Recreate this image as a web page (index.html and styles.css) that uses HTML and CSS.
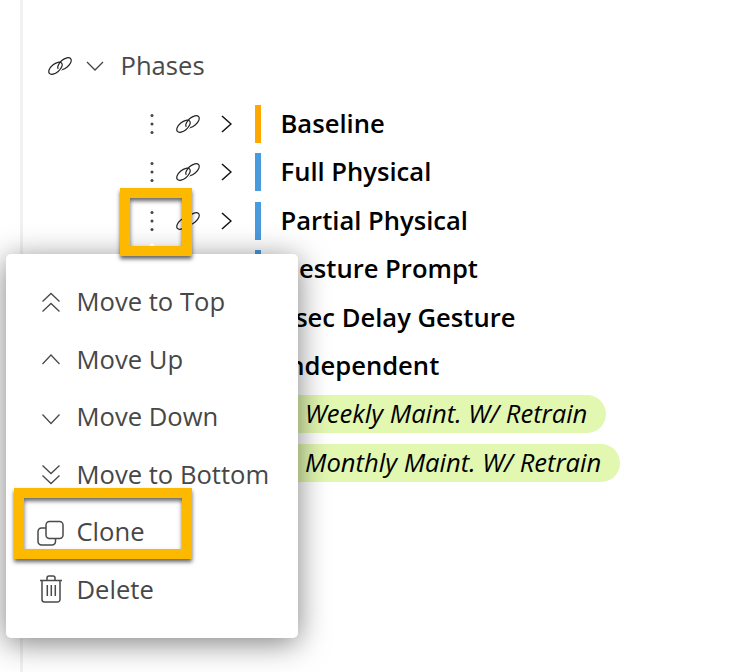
FILE: index.html
```html
<!DOCTYPE html>
<html lang="en">
<head>
<meta charset="utf-8">
<title>Phases</title>
<link rel="stylesheet" href="styles.css">
</head>
<body>
<svg class="defs" width="0" height="0" aria-hidden="true">
  <defs>
    <clipPath id="link-front"><path d="M-2 16L26 2V20H-2z"/></clipPath>
    <symbol id="link" viewBox="0 0 24 18">
      <ellipse class="link-ring" cx="16.500" cy="6.800" rx="8" ry="4.200" transform="rotate(-40 16.500 6.800)"/>
      <g clip-path="url(#link-front)">
        <ellipse class="link-halo" cx="7.500" cy="11.200" rx="8" ry="4.200" transform="rotate(-40 7.500 11.200)"/>
      </g>
      <ellipse class="link-ring" cx="7.500" cy="11.200" rx="8" ry="4.200" transform="rotate(-40 7.500 11.200)"/>
    </symbol>
    <symbol id="dots" viewBox="0 0 8 24">
      <circle cx="4" cy="3.500" r="1.500" fill="currentColor"/>
      <circle cx="4" cy="12" r="1.500" fill="currentColor"/>
      <circle cx="4" cy="20.500" r="1.500" fill="currentColor"/>
    </symbol>
  </defs>
</svg>
<main class="panel">
  <div class="phases-head">
    <svg class="link-icon head-link"><use href="#link"/></svg>
    <svg class="head-chevron" viewBox="0 0 18 10"><path d="M1 1l8 8 8-8" fill="none" stroke="currentColor" stroke-width="1.300"/></svg>
    <span class="head-title">Phases</span>
  </div>
  <ul class="tree">
    <li class="row">
      <svg class="dots"><use href="#dots"/></svg>
      <svg class="link-icon"><use href="#link"/></svg>
      <svg class="row-chevron" viewBox="0 0 11 18"><path d="M1 1l9 8-9 8" fill="none" stroke="currentColor" stroke-width="1.500"/></svg>
      <span class="bar bar-orange"></span>
      <span class="label">Baseline</span>
    </li>
    <li class="row">
      <svg class="dots"><use href="#dots"/></svg>
      <svg class="link-icon"><use href="#link"/></svg>
      <svg class="row-chevron" viewBox="0 0 11 18"><path d="M1 1l9 8-9 8" fill="none" stroke="currentColor" stroke-width="1.500"/></svg>
      <span class="bar bar-blue"></span>
      <span class="label">Full Physical</span>
    </li>
    <li class="row">
      <svg class="dots"><use href="#dots"/></svg>
      <svg class="link-icon"><use href="#link"/></svg>
      <svg class="row-chevron" viewBox="0 0 11 18"><path d="M1 1l9 8-9 8" fill="none" stroke="currentColor" stroke-width="1.500"/></svg>
      <span class="bar bar-blue"></span>
      <span class="label">Partial Physical</span>
    </li>
    <li class="row">
      <span class="bar bar-blue bar-offset"></span>
      <span class="label">Gesture Prompt</span>
    </li>
    <li class="row">
      <span class="bar bar-blue bar-offset"></span>
      <span class="label">5sec Delay Gesture</span>
    </li>
    <li class="row">
      <span class="bar bar-blue bar-offset"></span>
      <span class="label">Independent</span>
    </li>
    <li class="row">
      <span class="pill">Weekly Maint. W/ Retrain</span>
    </li>
    <li class="row">
      <span class="pill">Monthly Maint. W/ Retrain</span>
    </li>
  </ul>
</main>

<div class="menu">
  <span class="menu-arrow"></span>
  <div class="menu-item">
    <svg class="menu-icon" viewBox="0 0 24 24"><path d="M3.500 11.500l8.500-8 8.500 8M3.500 21.500l8.500-8 8.500 8"/></svg>
    <span>Move to Top</span>
  </div>
  <div class="menu-item">
    <svg class="menu-icon" viewBox="0 0 24 24"><path d="M3.500 16l8.500-9 8.500 9"/></svg>
    <span>Move Up</span>
  </div>
  <div class="menu-item">
    <svg class="menu-icon" viewBox="0 0 24 24"><path d="M3.500 8.500l8.500 9 8.500-9"/></svg>
    <span>Move Down</span>
  </div>
  <div class="menu-item">
    <svg class="menu-icon" viewBox="0 0 24 24"><path d="M3.500 2.500l8.500 8 8.500-8M3.500 12.500l8.500 8 8.500-8"/></svg>
    <span>Move to Bottom</span>
  </div>
  <div class="menu-item">
    <svg class="menu-icon menu-icon-bold" viewBox="0 0 24 24"><rect x="7" y="0.500" width="17" height="17" rx="3.500"/><path d="M7 7H2.500A3.500 3.500 0 0 0-1 10.500v10A3.500 3.500 0 0 0 2.500 24H13a3.500 3.500 0 0 0 3.500-3.500v-3"/></svg>
    <span>Clone</span>
  </div>
  <div class="menu-item">
    <svg class="menu-icon menu-icon-bold" viewBox="0 0 24 24"><path d="M1 2.500h22M8 2.500V0a2 2 0 0 1 2-2h4a2 2 0 0 1 2 2v2.500M3 2.500v19A2.500 2.500 0 0 0 5.500 24h13a2.500 2.500 0 0 0 2.500-2.500v-19M8.300 7v11M12.300 7v11M16.300 7v11"/></svg>
    <span>Delete</span>
  </div>
</div>

<div class="callout callout-dots"></div>
<div class="callout callout-clone"></div>
</body>
</html>
```

FILE: styles.css
```css
* { box-sizing: border-box; }
html, body { margin: 0; padding: 0; }
body {
  position: relative;
  width: 756px;
  height: 672px;
  overflow: hidden;
  background: #fff;
  font-family: "Open Sans", sans-serif;
}
.defs { position: absolute; }
.link-ring {
  fill: none;
  stroke: currentColor;
  stroke-width: 1.200;
}
.link-halo {
  fill: none;
  stroke: #fff;
  stroke-width: 3.400;
}
.panel {
  margin-left: 20px;
  height: 672px;
  border-left: 3px solid #f1f1f1;
  padding-top: 50px;
}
.phases-head {
  display: flex;
  align-items: center;
  height: 32px;
  padding-left: 25px;
  color: #4a4a4a;
}
.link-icon {
  width: 24px;
  height: 18px;
  flex: none;
  overflow: visible;
  color: #222;
}
.head-chevron {
  width: 18px;
  height: 10px;
  margin-left: 14px;
  flex: none;
  color: #444;
}
.head-title {
  margin-left: 16.500px;
  font-size: 25.6px;
  line-height: 32px;
}
.tree {
  list-style: none;
  margin: 23px 0 0;
  padding: 0;
  display: flex;
  flex-direction: column;
  gap: 10.4px;
}
.row {
  display: flex;
  align-items: center;
  height: 38px;
  padding-left: 125px;
  color: #000;
}
.dots {
  width: 8px;
  height: 24px;
  flex: none;
  color: #444;
}
.row .link-icon { margin-left: 20px; }
.row-chevron {
  width: 11px;
  height: 18px;
  margin-left: 21px;
  flex: none;
  color: #111;
}
.bar {
  width: 6px;
  height: 38px;
  margin-left: 23px;
  flex: none;
}
.bar-offset { margin-left: 107px; }
.bar-orange { background: #ffa800; }
.bar-blue { background: #4a9ade; }
.label {
  margin-left: 19.500px;
  font-size: 25.6px;
  font-weight: 600;
  line-height: 36px;
  white-space: nowrap;
}
.pill {
  margin-left: 113px;
  height: 38px;
  padding: 0 19px 0 44px;
  border-radius: 19px;
  background: #e2f7b0;
  font-size: 25.6px;
  font-style: italic;
  line-height: 37px;
  white-space: nowrap;
}
.menu {
  position: absolute;
  left: 6px;
  top: 254px;
  width: 292px;
  height: 384px;
  padding: 19.600px 0 0 33px;
  background: #fff;
  border-radius: 5px;
  box-shadow: 0 5px 30px rgba(0, 0, 0, 0.5);
  color: #474747;
}
.menu-arrow {
  position: absolute;
  left: 135px;
  top: -11px;
  border-left: 11px solid transparent;
  border-right: 11px solid transparent;
  border-bottom: 11px solid #fff;
}
.menu-item {
  display: flex;
  align-items: center;
  gap: 13.500px;
  height: 57.6px;
  font-size: 25.6px;
  line-height: 56.600px;
  white-space: nowrap;
}
.menu-icon {
  width: 24px;
  height: 24px;
  flex: none;
  overflow: visible;
  fill: none;
  stroke: #4a4a4a;
  stroke-width: 1.3;
}
.menu-icon-bold { stroke-width: 1.500; }
.callout {
  position: absolute;
  border: 10px solid #fdb900;
  box-shadow: 0 3px 4px rgba(0, 0, 0, 0.6), inset 0 3px 4px rgba(0, 0, 0, 0.6);
}
.callout-dots {
  left: 120px;
  top: 188px;
  width: 72px;
  height: 68px;
}
.callout-clone {
  left: 14px;
  top: 488px;
  width: 178px;
  height: 71px;
}
```
